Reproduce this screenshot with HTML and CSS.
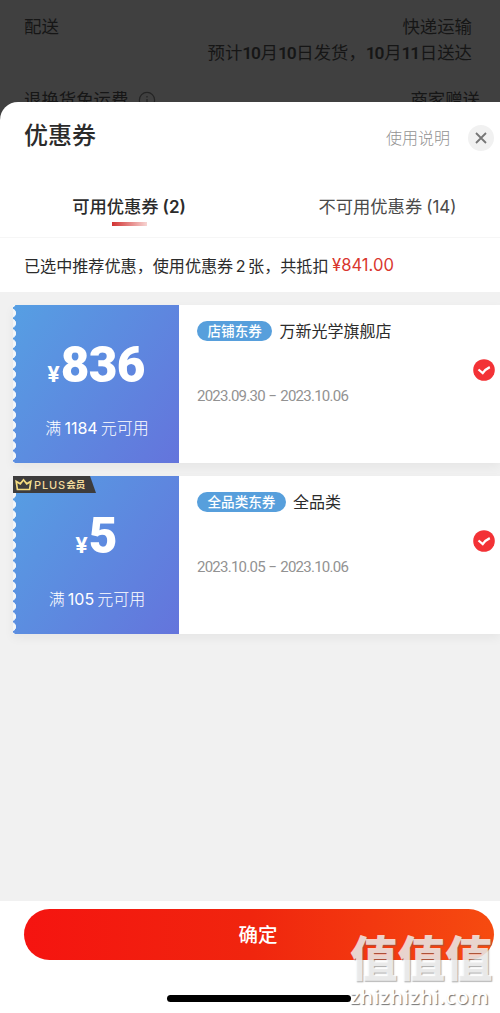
FILE: index.html
```html
<!DOCTYPE html>
<html lang="zh-CN">
<head>
<meta charset="utf-8">
<title>优惠券</title>
<link rel="stylesheet" href="styles.css">
</head>
<body>
<div class="screen">
  <section class="order">
    <div class="order-row"><span>配送</span><span class="carrier">快递运输</span></div>
    <div class="delivery">预计<b>10</b>月<b>10</b>日发货，<b>10</b>月<b>11</b>日送达</div>
    <div class="order-row returns">
      <span class="returns-label">退换货免运费
        <svg class="info-icon" viewBox="0 0 18 18"><circle cx="9" cy="9" r="7.6"/><path d="M9 5v1.5M9 8v5"/></svg>
      </span>
      <span>商家赠送</span>
    </div>
  </section>
  <main class="sheet">
    <header class="sheet-head">
      <h1>优惠券</h1>
      <a class="help">使用说明</a>
      <span class="close"><svg viewBox="0 0 26 26"><path d="M8 8l10 10M18 8L8 18"/></svg></span>
    </header>
    <nav class="tabs">
      <div class="tab active"><span>可用优惠券<i>(2)</i></span></div>
      <div class="tab"><span>不可用优惠券<i>(14)</i></span></div>
    </nav>
    <p class="summary"><span>已选中推荐优惠，使用优惠券<i class="count">2</i>张，共抵扣</span><span class="saved">¥841.00</span></p>
    <div class="coupons">
      <article class="coupon">
        <div class="value">
          <div class="amount"><span class="yen">¥</span><span class="num">836</span></div>
          <div class="condition">满<i>1184</i>元可用</div>
        </div>
        <div class="detail">
          <div class="name"><span class="tag">店铺东券</span><span>万新光学旗舰店</span></div>
          <div class="date">2023.09.30 − 2023.10.06</div>
        </div>
        <svg class="check" viewBox="0 0 22 22"><circle cx="11" cy="11" r="10.8"/><path d="M5.5 10.5l4.2 3.6q2.8-4 7.1-6"/></svg>
      </article>
      <article class="coupon">
        <div class="value">
          <div class="amount"><span class="yen">¥</span><span class="num">5</span></div>
          <div class="condition">满<i>105</i>元可用</div>
        </div>
        <div class="plus">
          <svg viewBox="0 0 17 13"><path d="M2.4 11.5L1.2 3.4l4.1 2.4 3.2-4 3.2 4 4.1-2.4-1.2 8.1z"/></svg>
          <span class="plus-word">PLUS</span><span class="plus-member">会员</span>
        </div>
        <div class="detail">
          <div class="name"><span class="tag">全品类东券</span><span>全品类</span></div>
          <div class="date">2023.10.05 − 2023.10.06</div>
        </div>
        <svg class="check" viewBox="0 0 22 22"><circle cx="11" cy="11" r="10.8"/><path d="M5.5 10.5l4.2 3.6q2.8-4 7.1-6"/></svg>
      </article>
    </div>
    <footer class="footer">
      <button class="confirm">确定</button>
      <div class="home-bar"></div>
    </footer>
  </main>
  <div class="watermark"><div class="mark">值值值</div><div class="site">zhizhizhi.com</div></div>
</div>
</body>
</html>
```
FILE: styles.css
```css
* { box-sizing: border-box; }
body { margin: 0; font-family: Inter, "Noto Sans CJK SC", sans-serif; color: #2b2b2b; }
i { font-style: normal; }
.screen { position: relative; width: 500px; height: 1013px; overflow: hidden; background: #404040; }

.order { height: 102px; padding: 14px 28px 0 24px; overflow: hidden; color: #161616; font-size: 17.4px; }
.order-row { display: flex; justify-content: space-between; height: 26px; line-height: 26px; }
.delivery { height: 26px; line-height: 26px; text-align: right; white-space: nowrap; }
.delivery b { font-family: Roboto, sans-serif; font-weight: 600; letter-spacing: -1.2px; margin: 0 .8px 0 0; }
.returns { margin: 21px -8px 0 0; }
.returns-label { display: flex; align-items: center; gap: 10px; }
.info-icon { width: 18px; height: 18px; fill: none; stroke: #242424; stroke-width: 1.2; }

.sheet { height: 911px; display: flex; flex-direction: column; background: #fff; border-top-left-radius: 18px; }
.sheet-head { height: 71px; padding: 0 6px 0 24px; display: flex; align-items: center; }
.sheet-head h1 { flex: 1; margin: 0; font-size: 24px; font-weight: 500; line-height: 36px; padding-bottom: 3px; }
.help { font-size: 16px; line-height: 24px; color: #929292; margin-right: 18px; font-weight: 300; }
.close { width: 26px; height: 26px; border-radius: 50%; background: #f1f1f1; }
.close svg { display: block; width: 26px; height: 26px; stroke: #767676; stroke-width: 1.8; }

.tabs { height: 65px; display: flex; border-bottom: 1px solid #f6f6f6; }
.tab { position: relative; width: 242px; text-align: center; padding: 19px 0 0 17px; font-size: 17.3px; line-height: 30px; color: #4a4a4a; white-space: nowrap; }
.tab i { margin-left: 4px; font-size: 17px; }
.tab.active { width: 258px; padding-left: 0; font-weight: 500; color: #2b2b2b; }
.tab.active i { font-weight: 600; }
.tab.active::after { content: ""; position: absolute; left: 112px; top: 49px; width: 35px; height: 4px; background: linear-gradient(90deg, #d23232, #f7d5d3); }

.summary { height: 54px; margin: 0; padding: 0 24px; display: flex; align-items: center; font-size: 16.1px; white-space: nowrap; }
.count { margin: 0 2.5px; }
.saved { color: #d9362e; margin-left: 3.5px; font-size: 16.6px; }

.coupons { flex: 1; padding: 13px 0 0 13px; background: #f1f1f1; display: flex; flex-direction: column; gap: 13px; }
.coupon { position: relative; height: 158px; display: flex; align-items: center; padding-right: 5px; background: linear-gradient(#fff, #fff) 166px 0 no-repeat; box-shadow: 0 4px 10px rgba(0,0,0,.05); }
.value { width: 166px; height: 158px; color: #fff; text-align: center; background: radial-gradient(ellipse 3.2px 4.4px at 0 50%, #f3f6f9 85%, transparent 100%) 0 3px / 6px 10.2px repeat-y, linear-gradient(125deg, #569fe3, #6474dc); }
.amount { display: flex; justify-content: center; align-items: baseline; padding-top: 28px; height: 108px; line-height: 64px; }
.yen { font: 700 22px/64px Inter, sans-serif; margin-right: 1px; }
.num { font: 900 49.5px/64px Roboto, sans-serif; letter-spacing: -.7px; }
.condition { font-size: 16px; line-height: 30px; padding-left: 2px; font-weight: 300; }
.condition i { margin: 0 3px; font-size: 16px; font-weight: 400; }
.detail { flex: 1; height: 158px; padding: 13px 0 0 18px; }
.name { display: flex; align-items: center; gap: 7px; font-size: 16px; line-height: 24px; height: 26px; }
.tag { height: 20px; padding: 0 10.5px; border-radius: 10px; background: #579fdc; color: #fff; font-size: 13.6px; line-height: 20px; font-weight: 500; }
.name span + span { padding-bottom: 1px; }
.date { margin-top: 40px; font: 400 15px/24px Roboto, sans-serif; letter-spacing: -.75px; word-spacing: .8px; color: #929292; }
.check { width: 22px; height: 22px; margin-bottom: 29px; fill: #f33236; }
.check path { fill: none; stroke: #fff; stroke-width: 2.3; }
.plus { position: absolute; left: 0; top: 0; width: 83px; height: 17px; display: flex; align-items: center; padding-left: 2px; color: #f3db9c; background: #3d3c3c; clip-path: polygon(0 0, 77px 0, 83px 17px, 0 17px); }
.plus svg { width: 17px; height: 13px; fill: none; stroke: #f5dc7f; stroke-width: 1.7; }
.plus-word { font: 500 11px/16px Inter, sans-serif; letter-spacing: .9px; margin-left: 2px; }
.plus-member { font-size: 9.5px; line-height: 16px; font-weight: 700; }

.footer { height: 112px; padding: 8px 6px 0 24px; }
.confirm { display: block; width: 470px; height: 51px; border: 0; border-radius: 26px; color: #fff; background: linear-gradient(90deg, #f51410, #f0250e 48%, #f64b10); font: 500 19.5px/51px Inter, "Noto Sans CJK SC", sans-serif; padding: 1px 2px 0 0; }
.home-bar { width: 184px; height: 7px; margin: 35px 0 0 143px; border-radius: 4px; background: #000; }

.watermark { position: absolute; left: 350px; top: 929px; width: 150px; color: rgba(255,255,255,.76); text-shadow: 1px 1px 1px rgba(100,100,100,.55); white-space: nowrap; }
.mark { font: 900 47.5px/54px "Noto Sans CJK SC", sans-serif; }
.site { margin-top: 1px; font: 500 20.3px/24px "Noto Sans", sans-serif; letter-spacing: .65px; color: #fff; text-shadow: 1px 1px 1px rgba(80,80,80,.8); }
```
